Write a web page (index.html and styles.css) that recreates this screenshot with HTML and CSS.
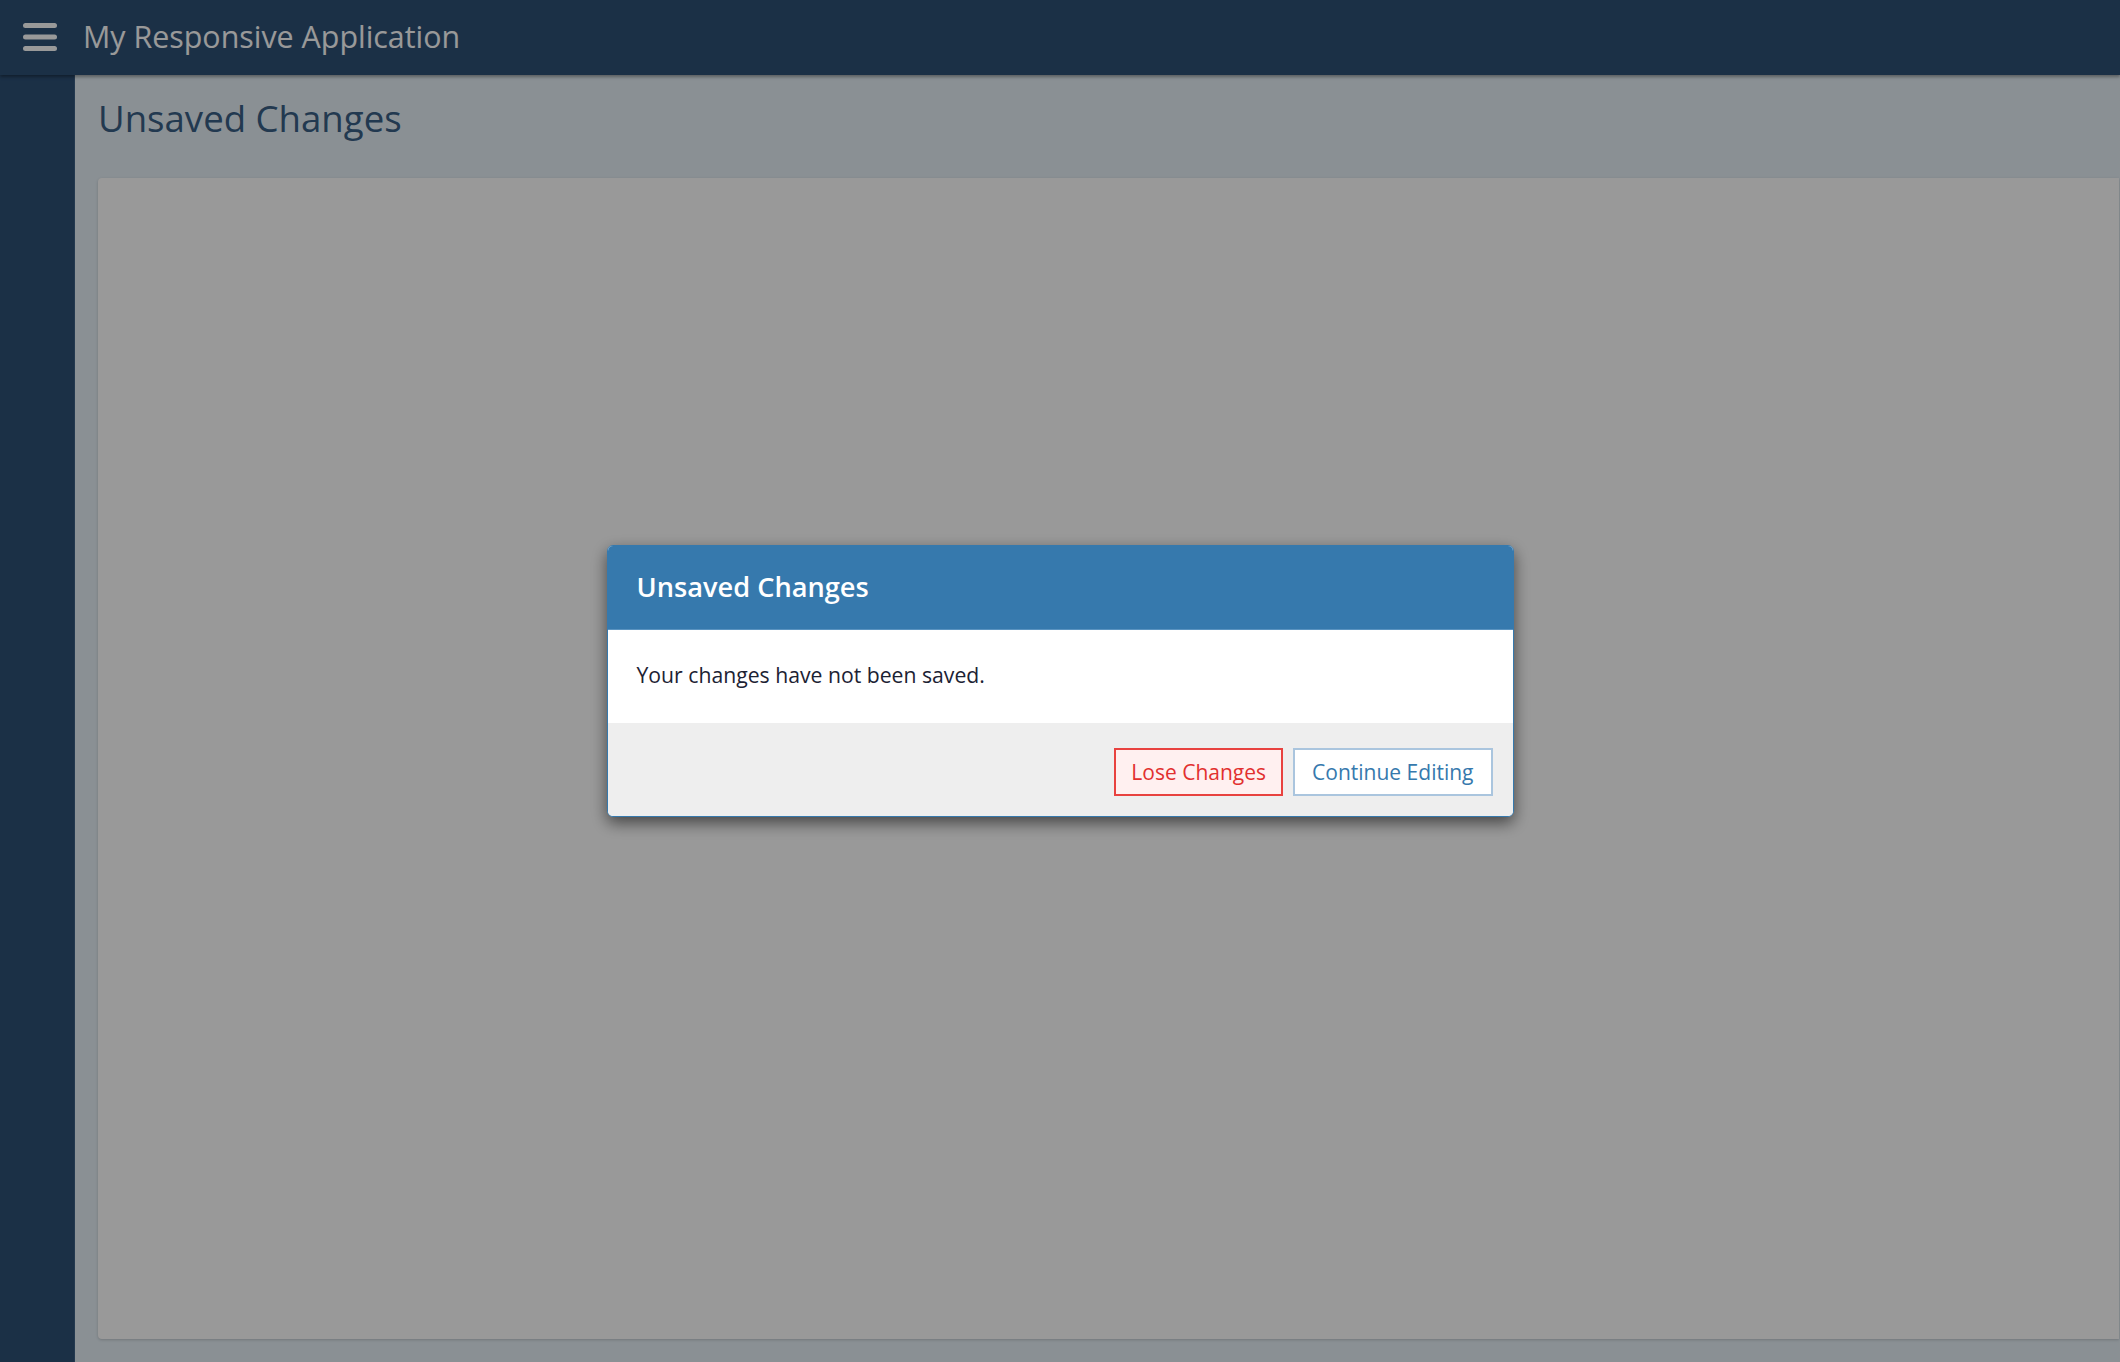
FILE: index.html
```html
<!DOCTYPE html>
<html lang="en">
<head>
<meta charset="utf-8">
<title>My Responsive Application</title>
<link rel="stylesheet" href="styles.css">
</head>
<body>
<div class="app">
  <header class="topbar">
    <button class="menu-btn" aria-label="Menu">
      <svg width="34" height="28" viewBox="0 0 34 28" aria-hidden="true">
        <rect x="0" y="0" width="34" height="5" rx="2.5" fill="#ffffff"/>
        <rect x="0" y="11.5" width="34" height="5" rx="2.5" fill="#ffffff"/>
        <rect x="0" y="23" width="34" height="5" rx="2.5" fill="#ffffff"/>
      </svg>
    </button>
    <span class="app-title">My Responsive Application</span>
  </header>
  <div class="body-row">
    <nav class="sidebar"></nav>
    <main class="main">
      <h1 class="page-title">Unsaved Changes</h1>
      <section class="card"></section>
    </main>
  </div>
</div>

<div class="backdrop">
  <div class="modal" role="dialog" aria-labelledby="modal-title">
    <div class="modal-header">
      <h2 id="modal-title" class="modal-title">Unsaved Changes</h2>
    </div>
    <div class="modal-body">Your changes have not been saved.</div>
    <div class="modal-footer">
      <button class="btn btn-danger">Lose Changes</button>
      <button class="btn btn-primary-outline">Continue Editing</button>
    </div>
  </div>
</div>
</body>
</html>
```
FILE: styles.css
```css
* { box-sizing: border-box; }

html, body {
  margin: 0;
  padding: 0;
  height: 100%;
  overflow: hidden;
}

body {
  font-family: "Open Sans", "Noto Sans", "Liberation Sans", sans-serif;
  background: #e6f0f7;
}

.app {
  display: flex;
  flex-direction: column;
  height: 100vh;
}

.topbar {
  height: 75px;
  flex: 0 0 75px;
  background: #2d5076;
  display: flex;
  align-items: center;
  padding-left: 23px;
  padding-bottom: 2px;
  box-shadow: 0 2px 3px rgba(0, 0, 0, 0.35);
  position: relative;
  z-index: 2;
}

.menu-btn {
  background: none;
  border: 0;
  padding: 0;
  width: 34px;
  height: 28px;
  display: flex;
  cursor: pointer;
}

.app-title {
  margin-left: 26px;
  color: #ffffff;
  font-size: 30.4px;
  font-weight: 400;
}

.body-row {
  flex: 1;
  display: flex;
  min-height: 0;
}

.sidebar {
  width: 75px;
  flex: 0 0 75px;
  background: #2d5076;
  border-right: 1px solid #3d5f84;
}

.main {
  flex: 1;
  display: flex;
  flex-direction: column;
  padding: 19px 1px 23px 23px;
  min-width: 0;
}

.page-title {
  margin: 0 0 34px;
  font-size: 36.6px;
  font-weight: 400;
  color: #3a5f85;
  line-height: 1.362;
}

.card {
  flex: 1;
  background: #ffffff;
  border-radius: 4px 0 0 4px;
  box-shadow: 0 1px 3px rgba(0, 0, 0, 0.18);
}

/* Modal */
.backdrop {
  position: fixed;
  inset: 0;
  background: rgba(0, 0, 0, 0.4);
  display: flex;
  align-items: center;
  justify-content: center;
  z-index: 10;
}

.modal {
  width: 907px;
  border: 1px solid #3679ad;
  border-radius: 6px;
  overflow: hidden;
  background: #ffffff;
  box-shadow: 0 6px 16px rgba(0, 0, 0, 0.55);
}

.modal-header {
  height: 84px;
  background: #3679ad;
  display: flex;
  align-items: center;
  padding: 0 29px 2px;
  border-bottom: 1px solid #5a93c0;
}

.modal-title {
  margin: 0;
  color: #ffffff;
  font-size: 27.2px;
  font-weight: 600;
}

.modal-body {
  height: 93px;
  display: flex;
  align-items: center;
  padding: 0 29px 5px;
  font-size: 21.2px;
  color: #1c2233;
  background: #ffffff;
}

.modal-footer {
  height: 93px;
  background: #eeeeee;
  display: flex;
  justify-content: flex-end;
  align-items: flex-start;
  gap: 10px;
  padding: 25px 20px 0;
}

.btn {
  height: 48px;
  font-family: inherit;
  font-size: 21px;
  border-radius: 0;
  cursor: pointer;
  display: inline-flex;
  align-items: center;
  justify-content: center;
}

.btn-danger {
  background: #fff0f0;
  border: 2px solid #e8423f;
  color: #e2302f;
  padding: 0 15px;
}

.btn-primary-outline {
  background: #ffffff;
  border: 2px solid #aac5de;
  color: #3679ad;
  padding: 0 17px;
}
```
